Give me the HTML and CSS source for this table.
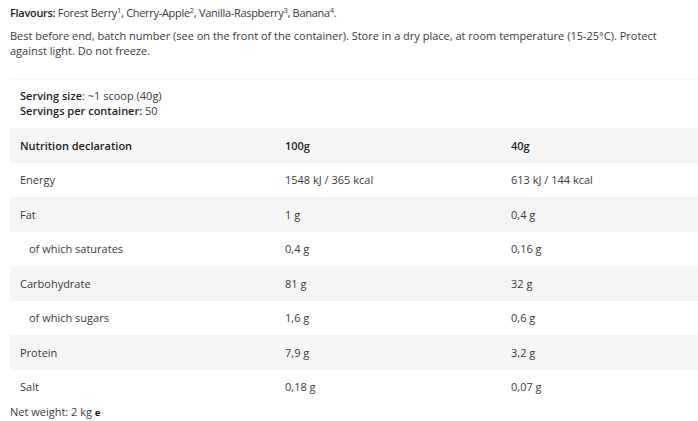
FILE: index.html
```html
<!DOCTYPE html>
<html>
<head>
<meta charset="utf-8">
<link rel="stylesheet" href="styles.css">
</head>
<body>
<div class="page">
  <p class="line"><b>Flavours:</b> Forest Berry<sup>1</sup>, Cherry-Apple<sup>2</sup>, Vanilla-Raspberry<sup>3</sup>, Banana<sup>4</sup>.</p>
  <p class="para">Best before end, batch number (see on the front of the container). Store in a dry place, at room temperature (15-25°C). Protect against light. Do not freeze.</p>
  <div class="box">
    <div class="serving">
      <div><b>Serving size</b>: ~1 scoop (40g)</div>
      <div><b>Servings per container:</b> 50</div>
    </div>
    <table class="nut">
      <tr class="shade head"><td class="c1">Nutrition declaration</td><td class="c2">100g</td><td class="c3">40g</td></tr>
      <tr><td>Energy</td><td>1548 kJ / 365 kcal</td><td>613 kJ / 144 kcal</td></tr>
      <tr class="shade"><td>Fat</td><td>1 g</td><td>0,4 g</td></tr>
      <tr><td class="sub">of which saturates</td><td>0,4 g</td><td>0,16 g</td></tr>
      <tr class="shade"><td>Carbohydrate</td><td>81 g</td><td>32 g</td></tr>
      <tr><td class="sub">of which sugars</td><td>1,6 g</td><td>0,6 g</td></tr>
      <tr class="shade"><td>Protein</td><td>7,9 g</td><td>3,2 g</td></tr>
      <tr><td>Salt</td><td>0,18 g</td><td>0,07 g</td></tr>
    </table>
  </div>
  <p class="net">Net weight: 2 kg <span class="est">e</span></p>
</div>
</body>
</html>
```
FILE: styles.css
```css
html, body {
  margin: 0;
  padding: 0;
  background: #fff;
}
body {
  font-family: "Open Sans", "Liberation Sans", sans-serif;
  font-size: 11px;
  color: #3a3a3a;
}
.page {
  padding: 5px 0 0 10px;
}
p {
  margin: 0;
}
b {
  color: #1e1e1e;
  font-weight: 600;
}
.line {
  line-height: 15px;
  margin-bottom: 8px;
  letter-spacing: -0.3px;
}
sup {
  font-size: 7.5px;
  line-height: 0;
  vertical-align: 4px;
}
.para {
  line-height: 15px;
  width: 665px;
}
.box {
  margin-top: 21px;
  border-top: 1px solid #f6f6f6;
}
.serving {
  padding: 8px 10px 10px;
  line-height: 15px;
}
.nut {
  width: 688px;
  border-collapse: collapse;
}
.nut td {
  height: 34.5px;
  padding: 0 10px;
  vertical-align: middle;
}
.nut .c1 { width: 245px; }
.nut .c2 { width: 206px; }
.shade td {
  background: #f5f5f5;
}
.head td {
  font-weight: 600;
  color: #1e1e1e;
}
.nut td.sub {
  padding-left: 19px;
}
.net {
  line-height: 15px;
  margin-top: 0;
}
.est {
  font-weight: 700;
  font-size: 9.5px;
  color: #111;
}
```
